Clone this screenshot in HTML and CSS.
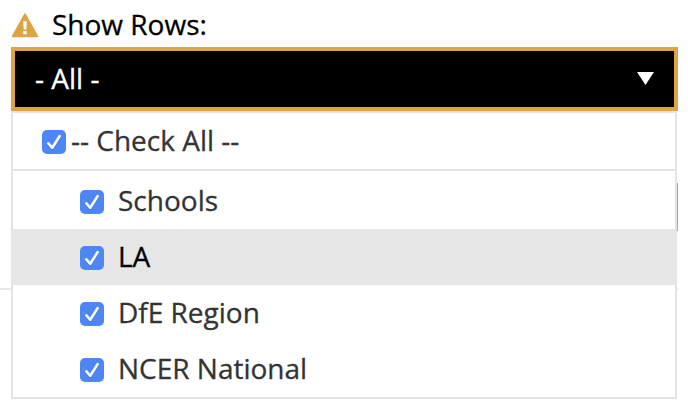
FILE: index.html
```html
<!DOCTYPE html>
<html lang="en">
<head>
    <meta charset="UTF-8">
    <meta name="viewport" content="width=device-width, initial-scale=1.0">
    <title>Show Rows</title>
    <link rel="stylesheet" href="styles.css">
</head>
<body>
    <!-- Edges of the page content behind the open menu -->
    <div class="page-rule"></div>
    <div class="page-field"></div>

    <div class="filter">
        <div class="filter-label">
            <svg class="warning-icon" viewBox="0 0 28 25">
                <path class="warning-shape" d="M13.2 0.8Q14 -0.3 14.8 0.8L27 22.8Q27.6 24.2 26.4 24.2H1.6Q0.4 24.2 1 22.8Z"/>
                <path class="warning-mark" d="M12.2 8.3H15.8L15.3 16.4H12.7ZM12.3 18H15.7V21.2H12.3Z"/>
            </svg>
            <span class="text">Show Rows:</span>
        </div>

        <div class="select">
            <span class="text">- All -</span>
            <svg class="select-arrow" viewBox="0 0 17 13"><path d="M0 0H17L8.5 13Z"/></svg>
        </div>

        <!-- Dropdown menu -->
        <div class="menu">
            <label class="check-all">
                <input type="checkbox" class="checkbox" checked>
                <span class="text">-- Check All --</span>
            </label>
            <div class="options">
                <label class="option">
                    <input type="checkbox" class="checkbox" checked>
                    <span class="text">Schools</span>
                </label>
                <label class="option active">
                    <input type="checkbox" class="checkbox" checked>
                    <span class="text">LA</span>
                </label>
                <label class="option">
                    <input type="checkbox" class="checkbox" checked>
                    <span class="text">DfE Region</span>
                </label>
                <label class="option">
                    <input type="checkbox" class="checkbox" checked>
                    <span class="text">NCER National</span>
                </label>
            </div>
        </div>
    </div>
</body>
</html>
```

FILE: styles.css
```css
* {
    margin: 0;
    padding: 0;
    box-sizing: border-box;
}

body {
    font-family: "Open Sans", "Noto Sans", sans-serif;
    font-size: 28px;
    line-height: 38px;
    color: #333;
    background: #fff;
    overflow: hidden;
}

.text {
    padding-bottom: 2px;
    -webkit-text-stroke: 0.3px currentColor;
}

/* Page content behind the menu */
.page-rule {
    position: absolute;
    top: 288px;
    left: 0;
    width: 678px;
    height: 2px;
    background: #e8e8e8;
}

.page-field {
    position: absolute;
    top: 183px;
    left: 600px;
    width: 78px;
    height: 48px;
    background: #a6a6a6;
}

.filter {
    position: relative;
    width: 667px;
    margin-left: 11px;
}

/* Label */
.filter-label {
    display: flex;
    align-items: center;
    height: 47px;
    padding-top: 3px;
    color: #000;
}

.warning-icon {
    width: 28px;
    height: 25px;
    margin-right: 13px;
}

.warning-shape {
    fill: #dea344;
}

.warning-mark {
    fill: #fff;
}

/* Select box */
.select {
    display: flex;
    align-items: center;
    justify-content: space-between;
    height: 64px;
    padding: 0 20px;
    border: 4px solid #dea344;
    background: #000;
    color: #fff;
}

.select-arrow {
    width: 17px;
    height: 13px;
    margin-bottom: 1px;
    fill: #fff;
}

/* Menu */
.menu {
    width: 666px;
    border: 2px solid #e4e4e4;
    background: #fff;
}

.check-all {
    display: flex;
    align-items: center;
    height: 58px;
    padding-left: 29px;
    border-bottom: 2px solid #e4e4e4;
}

.check-all .checkbox {
    margin-right: 5px;
}

.options {
    padding-top: 2px;
}

.option {
    display: flex;
    align-items: center;
    height: 56px;
    padding-left: 67px;
}

.option .checkbox {
    margin-right: 14px;
}

.option.active {
    background: #e6e6e6;
    color: #000;
}

.checkbox {
    appearance: none;
    flex: none;
    width: 24px;
    height: 24px;
    margin-top: 2px;
    border-radius: 5px;
    background: #4f86f6 url("data:image/svg+xml,%3Csvg xmlns='http://www.w3.org/2000/svg' viewBox='0 0 24 24' fill='none' stroke-width='2.6' stroke-linecap='round' stroke-linejoin='round'%3E%3Cpath d='M6.3 14.6L10.3 19L17.6 7.4' stroke='%233d6fd6'/%3E%3Cpath d='M6.3 13.4L10.3 17.8L17.6 6.2' stroke='white'/%3E%3C/svg%3E");
}
```
